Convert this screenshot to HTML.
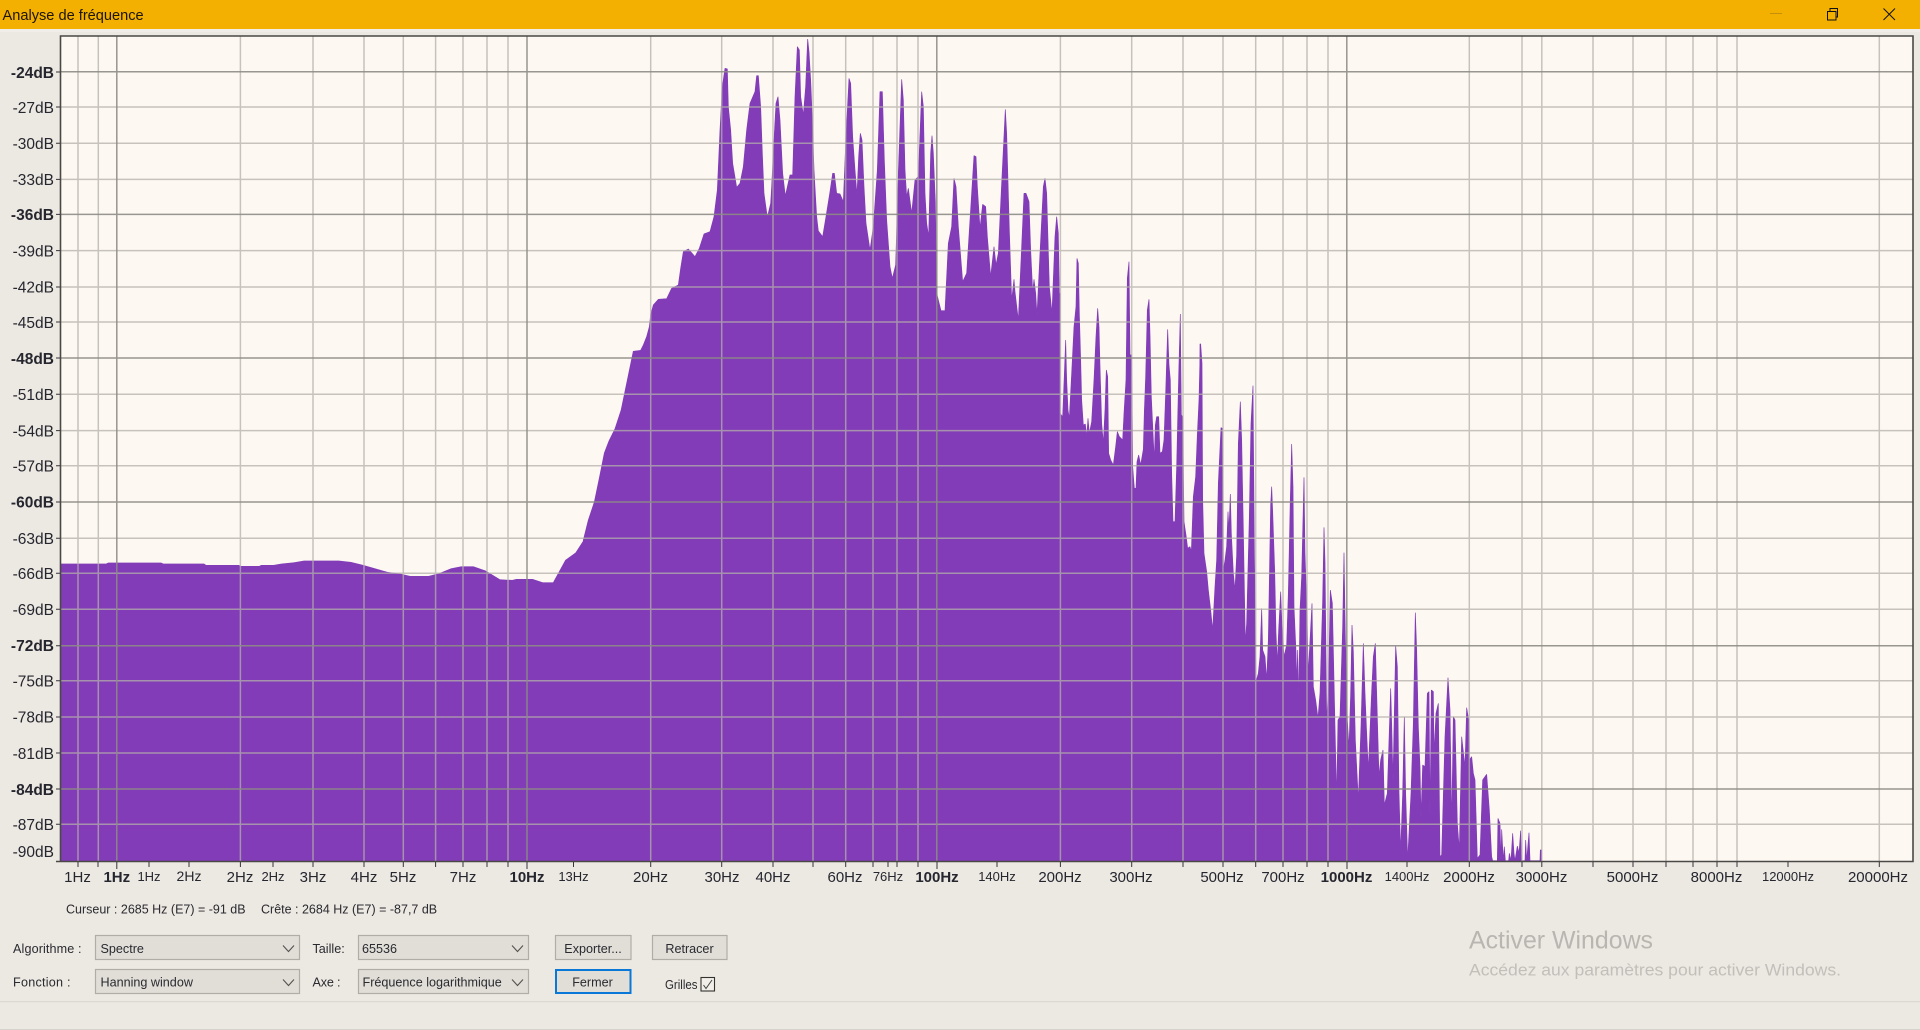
<!DOCTYPE html>
<html lang="fr">
<head>
<meta charset="utf-8">
<title>Analyse de fréquence</title>
<style>
html,body{margin:0;padding:0;width:1920px;height:1030px;overflow:hidden;background:#ece8e2}
svg{display:block;font-family:"Liberation Sans",Arial,sans-serif}
.s{filter:blur(.3px)}
</style>
</head>
<body>
<svg width="1920" height="1030" viewBox="0 0 1920 1030" xmlns="http://www.w3.org/2000/svg">
<rect width="1920" height="1030" fill="#ece8e2"/>
<rect y="29" width="1920" height="3" fill="#f1eeea"/>
<rect width="1920" height="29" fill="#f3b000"/>
<text class="s" x="2.5" y="20" font-size="14.6" fill="#1c1508">Analyse de fréquence</text>
<path d="M1770 13.5H1782" stroke="#c4900c" stroke-width="1" fill="none"/>
<path d="M1827.5 11.5h8.5v8.5h-8.5zM1830 11.5v-3h7.5v8.5h-1.5" stroke="#111" stroke-width="1" fill="none"/>
<path d="M1883.5 8.5L1895 20M1895 8.5L1883.5 20" stroke="#111" stroke-width="1" fill="none"/>

<!-- plot -->
<rect x="60" y="36" width="1853" height="825" fill="#fdf8f2"/>

<!-- spectrum -->
<g fill="#823cb8">
<polygon transform="translate(0 540) scale(.40816 .33333)" points="148,963 148,71 260,71 265,68 395,68 400,71 500,71 505,75 585,75 590,78 635,78 640,75 670,75 690,71 720,67 745,62 830,62 860,66 890,75 950,96 980,101 1005,108 1050,108 1075,100 1105,85 1130,79 1160,79 1190,92 1225,118 1255,120 1265,117 1305,117 1330,127 1355,127 1385,60 1410,38 1430,0 1430,963"/>
<polygon points="583,861 583,540 588,520 594,502 599,478 604,453 608.6,441 614.7,428.6 620.8,410 627,380 633,351 641,350 641,861"/>
<g stroke="#823cb8" stroke-width="2" stroke-linejoin="bevel">
<polygon transform="translate(640 20) scale(.33333)" points="0,2523 0,995 10,975 20,950 28,920 32,885 40,855 55,838 80,836 95,805 115,795 122,745 130,695 145,687 165,710 178,685 192,642 210,635 222,590 232,510 240,330 247,200 255,145 262,147 265,260 272,330 278,430 290,502 300,490 310,440 320,330 330,250 345,215 350,167 355,167 362,260 367,400 372,520 382,592 392,550 395,500 402,360 408,250 414,230 420,300 428,460 436,528 450,465 458,465 465,230 472,80 478,90 482,230 490,285 497,200 503,57 507,95 512,180 517,300 522,450 530,590 535,633 548,650 558,590 570,515 578,460 583,460 590,520 600,522 610,545 618,350 627,175 632,190 638,350 645,450 651,525 656,410 661,340 666,360 672,500 678,610 690,690 700,620 712,450 720,215 727,215 733,420 740,600 750,740 757,775 767,735 775,460 785,178 790,240 795,450 800,530 805,505 815,580 825,480 835,470 845,215 850,260 855,520 860,610 866,650 872,400 876,347 880,400 886,545 890,820 903,872 915,872 925,670 935,620 942,475 948,500 955,620 968,785 980,760 990,600 1002,407 1008,410 1012,500 1020,625 1028,553 1037,560 1042,650 1052,770 1062,680 1068,735 1075,700 1085,490 1096,268 1100,340 1108,630 1115,840 1122,778 1125,815 1135,900 1145,680 1152,520 1158,520 1167,545 1172,690 1178,815 1182,778 1187,820 1191,885 1200,700 1210,500 1215,475 1220,520 1228,800 1236,880 1245,650 1250,590 1255,640 1258,820 1260,820 1260,2523"/>
<polygon transform="translate(1000 240) scale(.33333)" points="180,1863 180,520 188,530 192,430 197,300 200,420 204,510 208,535 215,400 222,260 228,200 231,55 235,70 238,220 242,360 245,480 250,555 256,552 260,590 264,535 268,580 275,545 282,420 288,290 293,205 297,260 300,380 305,550 310,610 315,510 319,390 323,410 326,640 332,660 340,675 347,620 352,575 358,590 368,600 372,520 378,420 382,115 387,65 390,345 395,345 398,680 403,745 408,745 411,665 416,645 422,675 430,628 433,515 437,410 442,210 447,178 450,285 454,470 460,600 463,660 466,555 470,530 476,530 480,640 487,635 492,600 497,460 503,268 507,375 511,420 515,700 519,845 525,845 530,680 536,410 541,222 544,525 548,530 552,845 558,885 563,925 570,920 574,935 580,770 587,710 592,585 597,480 601,312 603,1863"/>
<polygon transform="translate(1200 560) scale(.33333)" points="0,902 0,-648 2,-648 6,-590 8,-180 12,-20 20,35 25,90 32,150 38,210 45,80 50,0 55,-230 63,-397 67,-395 70,30 75,0 80,-40 84,-145 87,-90 91,-198 94,-80 100,40 105,90 110,-15 115,-350 121,-475 125,-360 130,-90 136,250 140,190 148,-130 153,-410 159,-523 163,-30 168,365 175,340 180,290 185,145 188,270 195,290 200,360 205,240 212,-165 215,-220 218,-145 224,30 228,220 232,310 236,210 242,95 246,200 252,290 260,255 265,100 271,-185 275,-348 279,-220 282,140 288,275 290,370 293,270 296,430 300,150 305,50 312,-248 315,-20 320,130 325,345 328,280 336,130 340,380 347,420 354,475 360,400 368,120 372,-98 375,5 380,480 385,400 391,90 397,130 405,500 410,715 414,480 420,470 428,200 432,-22 436,230 442,480 447,565 452,400 456,195 460,275 466,540 475,720 483,500 490,250 495,400 500,520 505,630 515,395 520,290 526,250 530,400 537,650 542,600 549,570 553,735 562,700 572,385 575,490 579,660 587,258 592,320 597,700 602,875 608,700 613,470 617,700 623,900 633,700 640,490 646,158 650,270 655,500 660,620 663,770 668,615 675,620 682,400 687,395 690,770 694,390 700,395 702,580 708,460 715,430 720,890 725,885 735,530 744,353 750,450 755,795 760,470 765,480 772,790 778,870 785,530 795,620 800,443 806,480 808,600 815,590 820,640 825,660 832,895 840,885 848,660 860,643 868,750 875,890 878,902 892,902 894,775 900,790 903,902 905,808 910,902 913,860 916,902 926,902 928,880 933,902 938,820 942,880 945,902 952,858 957,880 962,812 965,902 975,902 977,840 980,902 987,818 990,902 1020,902 1021,870 1025,870 1025,902"/>
</g>
</g>

<!-- grid -->
<path fill="none" stroke="#b3b1a8" stroke-opacity=".74" stroke-width="1.5" d="M78 36V861M98.3 36V861M240.4 36V861M313 36V861M364 36V861M403.3 36V861M435.6 36V861M463 36V861M487 36V861M508 36V861M650.7 36V861M721.7 36V861M773 36V861M813 36V861M845.7 36V861M873 36V861M897 36V861M918 36V861M1060.4 36V861M1131.7 36V861M1183 36V861M1223 36V861M1255.7 36V861M1283 36V861M1307 36V861M1328 36V861M1469.3 36V861M1522 36V861M1541.8 36V861M1593 36V861M1633 36V861M1666 36V861M1693 36V861M1717 36V861M1737 36V861M1879.3 36V861M60 107H1913M60 143.3H1913M60 179.4H1913M60 250.6H1913M60 287H1913M60 322H1913M60 394.3H1913M60 430.6H1913M60 465.8H1913M60 538.2H1913M60 573.3H1913M60 609.3H1913M60 680.7H1913M60 717H1913M60 753H1913M60 824.3H1913"/>
<path fill="none" stroke="#8d8b85" stroke-opacity=".9" stroke-width="1.5" d="M116.8 36V861M527 36V861M936.8 36V861M1346.8 36V861M60 71.8H1913M60 214.4H1913M60 358H1913M60 502H1913M60 645.7H1913M60 789H1913"/>

<!-- frame and ticks -->
<path fill="none" stroke="#4a4946" stroke-width="1.6" d="M60.5 861.5V36H1913V861.5H56"/>
<path fill="none" stroke="#35343a" stroke-width="1" d="M56 72H60M56 107H60M56 143.3H60M56 179.4H60M56 214.4H60M56 250.6H60M56 287H60M56 322H60M56 358H60M56 394.3H60M56 430.6H60M56 465.8H60M56 502H60M56 538.2H60M56 573.3H60M56 609.3H60M56 645.7H60M56 680.7H60M56 717H60M56 753H60M56 789H60M56 824.3H60"/>
<path fill="none" stroke="#35343a" stroke-width="1" d="M78 862V867M98 862V867M116.8 862V869M149 862V867M189 862V867M240.4 862V867M273 862V867M313 862V867M364 862V867M403.3 862V867M435.6 862V867M463 862V867M487 862V867M508 862V867M527 862V869M573.5 862V867M650.7 862V867M721.7 862V867M773 862V867M813 862V867M845.7 862V867M873 862V867M888 862V867M897 862V867M918 862V867M937 862V869M997 862V867M1060.4 862V867M1131.7 862V867M1183 862V867M1223 862V867M1255.7 862V867M1283 862V867M1307 862V867M1328 862V867M1347 862V869M1407 862V867M1469.3 862V867M1522 862V867M1541.8 862V867M1593 862V867M1633 862V867M1666 862V867M1693 862V867M1717 862V867M1737 862V867M1788 862V867M1879.3 862V867"/>

<!-- y labels -->
<g class="s" font-size="15.5" fill="#26262f" text-anchor="end">
<text x="54" y="78" font-weight="bold">-24dB</text>
<text x="54" y="113">-27dB</text>
<text x="54" y="149">-30dB</text>
<text x="54" y="185">-33dB</text>
<text x="54" y="220" font-weight="bold">-36dB</text>
<text x="54" y="256.5">-39dB</text>
<text x="54" y="292.5">-42dB</text>
<text x="54" y="328">-45dB</text>
<text x="54" y="364" font-weight="bold">-48dB</text>
<text x="54" y="400">-51dB</text>
<text x="54" y="436.5">-54dB</text>
<text x="54" y="471.5">-57dB</text>
<text x="54" y="507.5" font-weight="bold">-60dB</text>
<text x="54" y="544">-63dB</text>
<text x="54" y="579">-66dB</text>
<text x="54" y="615">-69dB</text>
<text x="54" y="651" font-weight="bold">-72dB</text>
<text x="54" y="686.5">-75dB</text>
<text x="54" y="722.5">-78dB</text>
<text x="54" y="759">-81dB</text>
<text x="54" y="795" font-weight="bold">-84dB</text>
<text x="54" y="830">-87dB</text>
<text x="54" y="857">-90dB</text>
</g>

<!-- x labels -->
<g class="s" font-size="15" fill="#26262f" text-anchor="middle">
<text x="77.5" y="882">1Hz</text>
<text x="116.8" y="882" font-weight="bold">1Hz</text>
<text x="189" y="881" font-size="14">2Hz</text>
<text x="240" y="882">2Hz</text>
<text x="313" y="882">3Hz</text>
<text x="364" y="882">4Hz</text>
<text x="403" y="882">5Hz</text>
<text x="463" y="882">7Hz</text>
<text x="527" y="882" font-weight="bold">10Hz</text>
<text x="650.5" y="882">20Hz</text>
<text x="722" y="882">30Hz</text>
<text x="773" y="882">40Hz</text>
<text x="845" y="882">60Hz</text>
<text x="937" y="882" font-weight="bold">100Hz</text>
<text x="1060" y="882">200Hz</text>
<text x="1131" y="882">300Hz</text>
<text x="1222" y="882">500Hz</text>
<text x="1283" y="882">700Hz</text>
<text x="1346.5" y="882" font-weight="bold">1000Hz</text>
<text x="1469" y="882">2000Hz</text>
<text x="1541.5" y="882">3000Hz</text>
<text x="1632.5" y="882">5000Hz</text>
<text x="1716.5" y="882">8000Hz</text>
<text x="1878" y="882">20000Hz</text>
</g>
<g class="s" font-size="13" fill="#26262f" text-anchor="middle">
<text x="149" y="881">1Hz</text>
<text x="273" y="881">2Hz</text>
<text x="573.5" y="881">13Hz</text>
<text x="888" y="881">76Hz</text>
<text x="997" y="881">140Hz</text>
<text x="1407" y="881">1400Hz</text>
<text x="1788" y="881">12000Hz</text>
</g>

<!-- status -->
<g class="s" font-size="12.5" fill="#2a2a30">
<text x="66" y="913.5">Curseur : 2685 Hz (E7) = -91 dB</text>
<text x="261" y="913.5">Crête : 2684 Hz (E7) = -87,7 dB</text>
</g>

<!-- controls -->
<g fill="#e1ded8" stroke="#b0ada7" stroke-width="1.2">
<rect x="95.5" y="935.5" width="204" height="24"/>
<rect x="95.5" y="969.5" width="204" height="24"/>
<rect x="358.5" y="935.5" width="170" height="24"/>
<rect x="358.5" y="969.5" width="170" height="24"/>
<rect x="555.5" y="935.5" width="75.5" height="24"/>
<rect x="652.5" y="935.5" width="74.5" height="24"/>
</g>
<rect x="556" y="970" width="74.5" height="23" fill="#e1ded8" stroke="#0a78d7" stroke-width="2"/>
<path fill="none" stroke="#55534f" stroke-width="1.1" d="M283 945.5l5.5 6 5.5-6M283 979.5l5.5 6 5.5-6M512 945.5l5.5 6 5.5-6M512 979.5l5.5 6 5.5-6"/>
<g class="s" font-size="12.6" fill="#2a2a30">
<text x="13" y="953" textLength="68.5" lengthAdjust="spacing">Algorithme :</text>
<text x="13" y="986.5" textLength="57.5" lengthAdjust="spacing">Fonction :</text>
<text x="312.5" y="953">Taille:</text>
<text x="312.5" y="986.5" textLength="28" lengthAdjust="spacing">Axe :</text>
<text x="100.5" y="953">Spectre</text>
<text x="100.5" y="986.5">Hanning window</text>
<text x="362" y="953">65536</text>
<text x="362.5" y="986.5">Fréquence logarithmique</text>
<text x="593" y="953" text-anchor="middle">Exporter...</text>
<text x="689.5" y="953" text-anchor="middle">Retracer</text>
<text x="592.5" y="986.5" text-anchor="middle">Fermer</text>
<text x="665" y="989" textLength="32.5" lengthAdjust="spacingAndGlyphs">Grilles</text>
</g>
<rect x="701" y="977.5" width="13.5" height="13.5" fill="#f2efea" stroke="#33322f" stroke-width="1.1"/>
<path d="M703.5 985l2.5 3.5 6-8.5" fill="none" stroke="#44433f" stroke-width="1"/>

<!-- activation watermark -->
<text x="1469" y="948.5" font-size="25" fill="#b9b6b1" textLength="184" lengthAdjust="spacingAndGlyphs">Activer Windows</text>
<text x="1469" y="975.5" font-size="16.4" fill="#c2bfba" textLength="372" lengthAdjust="spacingAndGlyphs">Accédez aux paramètres pour activer Windows.</text>

<!-- bottom separators -->
<rect y="1001" width="1920" height="1.2" fill="#dcd8d2"/>
<rect y="1029" width="1920" height="1" fill="#d6d3cd"/>
</svg>
</body>
</html>
